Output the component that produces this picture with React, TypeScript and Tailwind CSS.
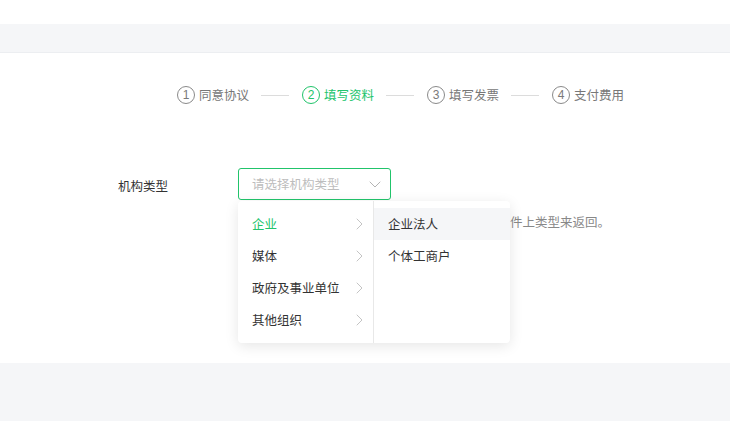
import React from 'react';

const FONT = "font-['PingFang_SC','Noto_Sans_CJK_SC',sans-serif]";

const steps = [
  { n: 1, label: '同意协议' },
  { n: 2, label: '填写资料' },
  { n: 3, label: '填写发票' },
  { n: 4, label: '支付费用' },
];

const categories = ['企业', '媒体', '政府及事业单位', '其他组织'];
const subTypes = ['企业法人', '个体工商户'];

function ChevronRight() {
  return (
    <svg viewBox="0 0 7 12" className="w-[7px] h-[12px]" fill="none" stroke="#c4c4c4" strokeWidth="1" strokeLinecap="round">
      <polyline points="1 1 6 6 1 11" />
    </svg>
  );
}

function ChevronDown() {
  return (
    <svg viewBox="0 0 12 7" className="w-[12px] h-[7px]" fill="none" stroke="#b4b4b4" strokeWidth="1" strokeLinecap="round">
      <polyline points="1 1 6 6 11 1" />
    </svg>
  );
}

export default function App() {
  const current = 2;

  return (
    <div className={`w-[730px] h-[421px] bg-white flex flex-col overflow-hidden ${FONT}`}>
      <div className="h-[24px] shrink-0" />
      <div className="h-[29px] shrink-0 bg-[#f5f6f8] border-b border-[#eceef1]" />

      {/* main card */}
      <div className="h-[310px] shrink-0 relative">
        {/* steps */}
        <div className="flex items-center pl-[177px] mt-[32px] h-[20px]">
          {steps.map((s, i) => {
            const active = s.n === current;
            return (
              <React.Fragment key={s.n}>
                <div className="flex items-center">
                  <span
                    className={`w-[18px] h-[18px] rounded-full border flex items-center justify-center text-[12px] leading-none ${
                      active ? 'border-[#21c46b] text-[#21c46b]' : 'border-[#8a8a8a] text-[#7a7a7a]'
                    } font-['Liberation_Sans',sans-serif]`}
                  >
                    {s.n}
                  </span>
                  <span
                    className={`ml-[4px] w-[52px] text-[12.5px] leading-[20px] ${
                      active ? 'text-[#21c46b]' : 'text-[#777]'
                    }`}
                  >
                    {s.label}
                  </span>
                </div>
                {i < steps.length - 1 && (
                  <div className="ml-[10px] mr-[13px] w-[28px] h-px bg-[#dcdcdc]" />
                )}
              </React.Fragment>
            );
          })}
        </div>

        {/* form row */}
        <div className="flex items-start pl-[118px] mt-[63px]">
          <div className="w-[120px] h-[32px] pt-[4px] flex items-center text-[12.5px] text-[#333]">机构类型</div>
          <div className="flex flex-col">
            <div className="w-[153px] h-[32px] border border-[#21c46b] rounded-[3px] flex items-center justify-between pl-[13px] pr-[9px]">
              <span className="text-[12.5px] text-[#bdbdbd]">请选择机构类型</span>
              <ChevronDown />
            </div>
            <p className="mt-[12px] pl-[22px] text-[12.5px] leading-[20px] text-[#888] whitespace-nowrap">
              请根据您的营业执照或其他登记证书等相关证件上类型来返回。
            </p>
          </div>
        </div>

        {/* cascader dropdown */}
        <div className="absolute left-[238px] top-[148px] w-[272px] h-[142px] bg-white rounded-[4px] shadow-[0_3px_14px_rgba(0,0,0,0.1)] flex">
          <div className="w-[136px] border-r border-[#e8e8e8] py-[7px]">
            {categories.map((c, i) => (
              <div key={c} className="h-[32px] flex items-center justify-between pl-[14px] pr-[10px]">
                <span className={`text-[12.5px] ${i === 0 ? 'text-[#21c46b]' : 'text-[#333]'}`}>{c}</span>
                <ChevronRight />
              </div>
            ))}
          </div>
          <div className="flex-1 py-[7px]">
            {subTypes.map((t, i) => (
              <div
                key={t}
                className={`h-[32px] flex items-center pl-[14px] text-[12.5px] text-[#333] ${i === 0 ? 'bg-[#f5f6f8]' : ''}`}
              >
                {t}
              </div>
            ))}
          </div>
        </div>
      </div>

      <div className="flex-1 bg-[#f5f6f8]" />
    </div>
  );
}
